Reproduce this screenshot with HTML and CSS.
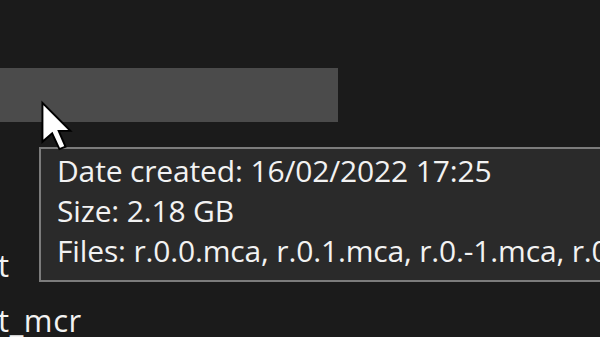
FILE: index.html
```html
<!DOCTYPE html>
<html>
<head>
<meta charset="utf-8">
<link rel="stylesheet" href="styles.css">
</head>
<body>
<div class="list">
  <div class="row selected"></div>
  <div class="row"></div>
  <div class="row"></div>
  <div class="row"><span class="name">t</span></div>
  <div class="row"><span class="name">t_mcr</span></div>
</div>
<div class="tooltip">
  <div class="line">Date created: 16/02/2022 17:25</div>
  <div class="line">Size: 2.18 GB</div>
  <div class="line">Files: r.0.0.mca, r.0.1.mca, r.0.-1.mca, r.0.-2.mca</div>
</div>
<svg class="cursor" width="34" height="54" viewBox="-1 -1 14 21">
  <path d="M0 0 L0 16 L4 12.5 L7 19 L9.5 18 L6.7 11.5 L11.5 11.5 Z" fill="#fff" stroke="#000" stroke-width="0.8" stroke-linejoin="miter"/>
</svg>
</body>
</html>
```
FILE: styles.css
```css
html, body {
  margin: 0;
  padding: 0;
  width: 600px;
  height: 337px;
  overflow: hidden;
  background: #1b1b1b;
}
body {
  position: relative;
  font-family: "Open Sans", "Noto Sans", sans-serif;
  font-weight: 500;
  color: #f2f2f2;
}
.list {
  padding-top: 68px;
  display: flex;
  flex-direction: column;
}
.row {
  height: 55px;
  width: 338px;
  display: flex;
  align-items: center;
}
.row.selected {
  background: #4b4b4b;
  height: 54px;
  margin-bottom: 1px;
}
.name {
  font-size: 31px;
  letter-spacing: 0.6px;
  margin-left: -2px;
  position: relative;
  top: 4px;
}
.tooltip {
  position: absolute;
  left: 39px;
  top: 147px;
  width: 600px;
  height: 135px;
  border: 2px solid #7c7c7c;
  background: #2a2a2a;
  padding: 2px 0 0 16px;
  box-sizing: border-box;
  font-size: 30px;
  letter-spacing: -0.15px;
  white-space: nowrap;
}
.line {
  height: 40px;
  line-height: 40px;
}
.cursor {
  position: absolute;
  left: 40px;
  top: 99px;
}
```
